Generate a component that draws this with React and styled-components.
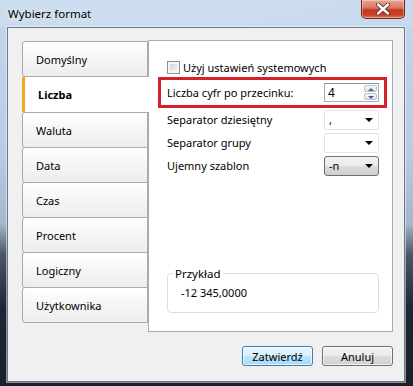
import React from 'react';
import styled, { createGlobalStyle } from 'styled-components';

const GlobalStyle = createGlobalStyle`
    html, body {
        margin: 0;
        padding: 0;
        background: #1c2531;
    }
    body {
        font-family: "Noto Sans", "Open Sans", sans-serif;
        font-size: 11px;
        color: #000;
    }
`;

const tabs = ["Domyślny", "Liczba", "Waluta", "Data", "Czas", "Procent", "Logiczny", "Użytkownika"];

const App = () => {
    return (
        <Window>
            <GlobalStyle />
            <TitleBar>
                <Title>Wybierz format</Title>
                <CloseButton>
                    <svg width="18" height="12" viewBox="0 0 18 12">
                        <path d="M4 1.5 L14 10.5 M14 1.5 L4 10.5" stroke="#4a2a22" strokeWidth="4" strokeLinecap="round" />
                        <path d="M4 1.5 L14 10.5 M14 1.5 L4 10.5" stroke="#ffffff" strokeWidth="2.4" strokeLinecap="round" />
                    </svg>
                </CloseButton>
            </TitleBar>
            <Client>
                <Body>
                    <TabList>
                        {tabs.map((t) => (
                            <Tab key={t} active={t === "Liczba"}>{t}</Tab>
                        ))}
                    </TabList>
                    <Panel>
                        <CheckRow>
                            <CheckBox />
                            <span>Użyj ustawień systemowych</span>
                        </CheckRow>
                        <Highlight>
                            <span>Liczba cyfr po przecinku:</span>
                            <SpinBox>
                                <SpinValue>4</SpinValue>
                                <SpinButtons>
                                    <SpinArrow up />
                                    <SpinArrow />
                                </SpinButtons>
                            </SpinBox>
                        </Highlight>
                        <FormRow>
                            <span>Separator dziesiętny</span>
                            <Select>
                                <span>,</span>
                                <Caret />
                            </Select>
                        </FormRow>
                        <FormRow>
                            <span>Separator grupy</span>
                            <Select>
                                <span></span>
                                <Caret />
                            </Select>
                        </FormRow>
                        <FormRow>
                            <span>Ujemny szablon</span>
                            <Select button>
                                <span>-n</span>
                                <Caret />
                            </Select>
                        </FormRow>
                        <Spacer />
                        <GroupBox>
                            <Legend>Przykład</Legend>
                            <Sample>-12 345,0000</Sample>
                        </GroupBox>
                    </Panel>
                </Body>
                <ButtonRow>
                    <Button primary>Zatwierdź</Button>
                    <Button>Anuluj</Button>
                </ButtonRow>
            </Client>
        </Window>
    );
};

const Window = styled.div`
    width: 413px;
    height: 386px;
    box-sizing: border-box;
    padding: 0 8px 4px 7px;
    display: flex;
    flex-direction: column;
    background: linear-gradient(to bottom, #c3d7ec 0%, #b7cde4 40%, #a3b6cb 58%, #4b5766 66%, #1d2634 80%, #18202b 100%);
    overflow: hidden;
`;

const TitleBar = styled.div`
    height: 28px;
    display: flex;
    align-items: flex-start;
    justify-content: space-between;
    background: linear-gradient(to right, rgba(255,255,255,0.15), rgba(220,232,245,0.4) 40%, rgba(255,255,255,0.1));
    margin: 0 -8px 0 -7px;
    padding: 0 8px 0 8px;
`;

const Title = styled.div`
    padding-top: 6px;
    font-size: 11.5px;
    color: #000;
    text-shadow: 0 0 8px rgba(255,255,255,0.9);
`;

const CloseButton = styled.div`
    width: 44px;
    height: 19px;
    box-sizing: border-box;
    border: 1px solid #6b2b22;
    border-top: none;
    border-radius: 0 0 5px 5px;
    background: linear-gradient(to bottom, #e8a894 0%, #d9735e 45%, #c2361f 55%, #c8432a 85%, #e27f5c 100%);
    display: flex;
    align-items: center;
    justify-content: center;
    box-shadow: inset 0 0 0 1px rgba(255,255,255,0.35);
`;

const Client = styled.div`
    flex: 1;
    background: #f0f0f0;
    border: 1px solid #6c7785;
    box-shadow: 0 0 0 1px rgba(255,255,255,0.5);
    display: flex;
    flex-direction: column;
    padding: 12px 11px 15px 14px;
`;

const Body = styled.div`
    display: flex;
    height: 292px;
`;

const TabList = styled.div`
    width: 126px;
    padding-top: 1px;
    display: flex;
    flex-direction: column;
    position: relative;
    z-index: 1;
`;

const Tab = styled.div`
    height: ${(props) => props.active ? 37 : 36}px;
    margin-right: ${(props) => props.active ? "-1px" : "0"};
    box-sizing: border-box;
    display: flex;
    align-items: center;
    padding-left: 13px;
    border: 1px solid #a9aaad;
    border-right: ${(props) => props.active ? "none" : "1px solid #a9aaad"};
    border-left: ${(props) => props.active ? "3px solid #f0a81c" : "1px solid #a9aaad"};
    border-radius: 3px 0 0 3px;
    font-weight: ${(props) => props.active ? "bold" : "normal"};
    background: ${(props) => props.active ? "#ffffff" : "linear-gradient(to bottom, #ffffff 0%, #f5f5f5 50%, #ededed 100%)"};
    & + & {
        margin-top: -1px;
    }
`;

const Panel = styled.div`
    flex: 1;
    background: #ffffff;
    border: 1px solid #a9aaad;
    display: flex;
    flex-direction: column;
    padding: 0 13px 18px 18px;
`;

const CheckRow = styled.div`
    display: flex;
    align-items: center;
    gap: 3px;
    margin-top: 19px;
    height: 15px;
`;

const CheckBox = styled.div`
    width: 13px;
    height: 13px;
    box-sizing: border-box;
    border: 1px solid #8e8f8f;
    background: linear-gradient(135deg, #cbcfd5 0%, #e6e8eb 60%, #f4f5f6 100%);
    box-shadow: inset 0 0 0 2px #f4f4f4;
`;

const Highlight = styled.div`
    margin: 2px -8px 0 -9px;
    height: 31px;
    box-sizing: border-box;
    border: 3px solid #d5202a;
    display: flex;
    align-items: center;
    justify-content: space-between;
    padding: 0 5px 0 6px;
`;

const SpinBox = styled.div`
    width: 55px;
    height: 19px;
    box-sizing: border-box;
    border: 1px solid #abadb3;
    border-top-color: #8d9199;
    display: flex;
    background: #fff;
    font-size: 12px;
`;

const SpinValue = styled.div`
    flex: 1;
    padding-left: 3px;
    line-height: 17px;
`;

const SpinButtons = styled.div`
    width: 13px;
    display: flex;
    flex-direction: column;
    gap: 1px;
    padding: 1px 1px 1px 0;
`;

const SpinArrow = styled.div`
    flex: 1;
    border: 1px solid #b8c3cf;
    border-radius: 2px;
    background: linear-gradient(to bottom, #f4f7fa, #dfe6ee);
    position: relative;
    &::after {
        content: "";
        position: absolute;
        left: 3px;
        top: 2px;
        border-left: 3px solid transparent;
        border-right: 3px solid transparent;
        ${(props) => props.up ? "border-bottom: 3px solid #4d6185;" : "border-top: 3px solid #4d6185;"}
    }
`;

const FormRow = styled.div`
    display: flex;
    align-items: center;
    justify-content: space-between;
    height: 21px;
    margin-top: 1px;
    & + & {
        margin-top: 2px;
    }
`;

const Select = styled.div`
    width: 55px;
    height: 20px;
    box-sizing: border-box;
    display: flex;
    align-items: center;
    justify-content: space-between;
    padding: 0 5px 0 4px;
    border: 1px solid ${(props) => props.button ? "#707070" : "#e2e4e8"};
    border-radius: ${(props) => props.button ? "3px" : "2px"};
    background: ${(props) => props.button ? "linear-gradient(to bottom, #f2f2f2 0%, #ebebeb 50%, #dddddd 51%, #cfcfcf 100%)" : "#ffffff"};
`;

const Caret = styled.div`
    width: 0;
    height: 0;
    border-left: 4px solid transparent;
    border-right: 4px solid transparent;
    border-top: 4px solid #000;
`;

const Spacer = styled.div`
    flex: 1;
`;

const GroupBox = styled.fieldset`
    margin: 0;
    padding: 0 0 0 13px;
    height: 47px;
    box-sizing: border-box;
    border: 1px solid #d5dfe5;
    border-radius: 4px;
    display: flex;
    align-items: flex-start;
`;

const Legend = styled.legend`
    padding: 0 2px;
    margin-left: -8px;
    color: #000;
    font-size: 11.5px;
`;

const Sample = styled.div`
    margin-top: 4px;
`;

const ButtonRow = styled.div`
    display: flex;
    justify-content: flex-end;
    gap: 9px;
    margin-top: 14px;
`;

const Button = styled.div`
    width: 71px;
    height: 20px;
    box-sizing: border-box;
    display: flex;
    align-items: center;
    justify-content: center;
    border: 1px solid ${(props) => props.primary ? "#3c7fb1" : "#707070"};
    border-radius: 3px;
    background: ${(props) => props.primary ? "linear-gradient(to bottom, #eaf6fd 0%, #d9f0fc 50%, #bee6fd 51%, #a7d9f5 100%)" : "linear-gradient(to bottom, #f2f2f2 0%, #ebebeb 50%, #dddddd 51%, #cfcfcf 100%)"};
    box-shadow: inset 0 0 0 1px rgba(255,255,255,0.7);
`;

export default App;
